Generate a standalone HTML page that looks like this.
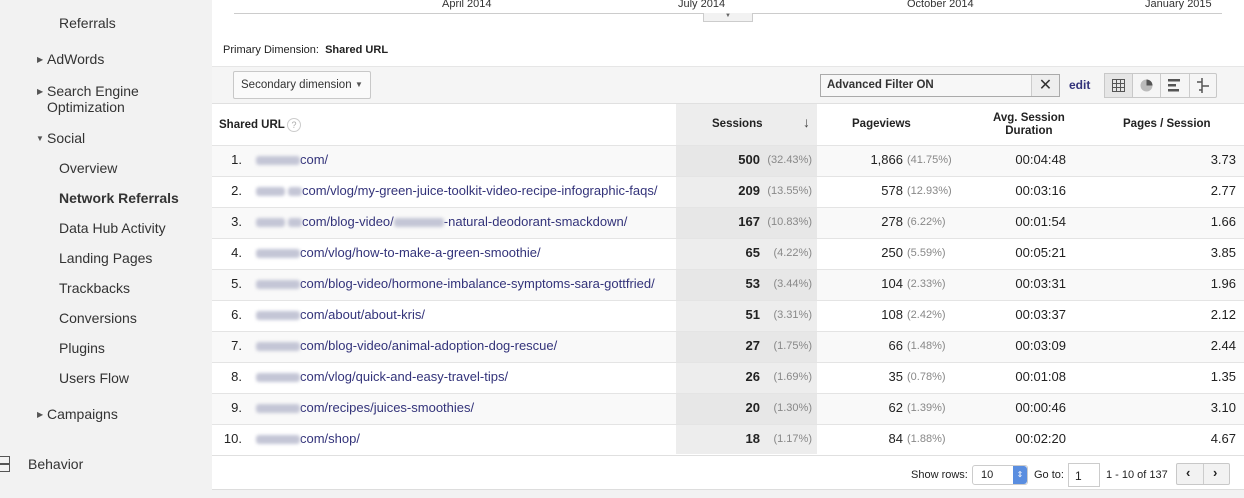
<!DOCTYPE html>
<html><head><meta charset="utf-8">
<style>
*{margin:0;padding:0;box-sizing:border-box}
body{width:1244px;height:498px;overflow:hidden;background:#f2f2f2;font-family:"Liberation Sans",Arial,sans-serif;font-size:13px;color:#222;position:relative}
.a{position:absolute;white-space:nowrap}
.side{left:0;top:0;width:212px;height:498px;background:#f2f2f2}
.main{left:212px;top:0;width:1032px;height:490px;background:#fff;border-bottom:1px solid #ddd}
.nav{font-size:14px;color:#333}
.tri{font-size:8px;color:#555}
.row{left:212px;width:1032px;height:31px;border-top:1px solid #e4e4e4}
.blob{display:inline-block;height:9px;background:#c4c6d6;filter:blur(1.5px);vertical-align:middle;border-radius:3px}
.url{color:#33337a;font-size:13px}
.pct{color:#888;font-size:11px}
.hdr{font-weight:bold;font-size:11.5px;color:#222}
.btn{border:1px solid #c8c8c8;background:#f8f8f8;border-radius:2px}
</style></head><body>
<div class="a side"></div>
<div class="a main"></div>

<div class="a nav" style="left:59px;top:15px">Referrals</div>
<div class="a tri" style="left:37px;top:55px">▶</div><div class="a nav" style="left:47px;top:51px">AdWords</div>
<div class="a tri" style="left:37px;top:87px">▶</div><div class="a nav" style="left:47px;top:83px;line-height:16px">Search Engine<br>Optimization</div>
<div class="a tri" style="left:36px;top:134px">▼</div><div class="a nav" style="left:47px;top:130px">Social</div>
<div class="a nav" style="left:59px;top:160px">Overview</div>
<div class="a nav" style="left:59px;top:190px;font-weight:bold">Network Referrals</div>
<div class="a nav" style="left:59px;top:220px">Data Hub Activity</div>
<div class="a nav" style="left:59px;top:250px">Landing Pages</div>
<div class="a nav" style="left:59px;top:280px">Trackbacks</div>
<div class="a nav" style="left:59px;top:310px">Conversions</div>
<div class="a nav" style="left:59px;top:340px">Plugins</div>
<div class="a nav" style="left:59px;top:370px">Users Flow</div>
<div class="a tri" style="left:37px;top:410px">▶</div><div class="a nav" style="left:47px;top:406px">Campaigns</div>
<div class="a" style="left:-4px;top:456px;width:14px;height:16px;border:1.5px solid #555;border-left:none"></div>
<div class="a" style="left:0;top:463px;width:10px;height:1.5px;background:#555"></div>
<div class="a nav" style="left:28px;top:456px">Behavior</div>

<!-- chart axis -->
<div class="a" style="left:234px;top:13px;width:988px;height:1px;background:#ccc"></div>
<div class="a" style="left:442px;top:-2px;font-size:11px;color:#333">April 2014</div>
<div class="a" style="left:678px;top:-2px;font-size:11px;color:#333">July 2014</div>
<div class="a" style="left:907px;top:-2px;font-size:11px;color:#333">October 2014</div>
<div class="a" style="left:1145px;top:-2px;font-size:11px;color:#333">January 2015</div>
<div class="a" style="left:703px;top:13px;width:50px;height:9px;background:#f2f2f2;border:1px solid #ccc;border-top:none;font-size:6px;color:#666;text-align:center;line-height:7px">▼</div>

<div class="a" style="left:223px;top:44px;font-size:11px;color:#222">Primary Dimension:&nbsp; <b>Shared URL</b></div>
<!-- toolbar band -->
<div class="a" style="left:212px;top:66px;width:1032px;height:38px;background:#f5f5f5;border-top:1px solid #e6e6e6;border-bottom:1px solid #e0e0e0"></div>
<div class="a btn" style="left:233px;top:71px;width:138px;height:28px;background:#fafafa"></div>
<div class="a" style="left:241px;top:79px;font-size:11.5px;color:#333">Secondary dimension</div>
<div class="a" style="left:355px;top:80px;font-size:8px;color:#555">▼</div>
<div class="a" style="left:820px;top:74px;width:240px;height:23px;border:1px solid #aaa;background:#f7f7f7"></div>
<div class="a" style="left:1031px;top:75px;width:28px;height:21px;background:#eee;border-left:1px solid #ccc;text-align:center;font-size:16px;line-height:21px;color:#333">✕</div>
<div class="a" style="left:827px;top:79px;font-size:11.5px;font-weight:bold;color:#333">Advanced Filter ON</div>
<div class="a" style="left:1069px;top:78px;font-size:12px;font-weight:bold;color:#33337a">edit</div>
<div class="a btn" style="left:1104px;top:73px;width:113px;height:25px;background:#f5f5f5"></div>
<div class="a" style="left:1104px;top:73px;width:29px;height:25px;background:#e6e6e6;border:1px solid #c8c8c8"></div>
<div class="a" style="left:1160px;top:74px;width:1px;height:23px;background:#ccc"></div>
<div class="a" style="left:1189px;top:74px;width:1px;height:23px;background:#ccc"></div>
<svg class="a" style="left:1112px;top:79px" width="13" height="13"><g stroke="#555" fill="none" stroke-width="1"><rect x=".5" y=".5" width="12" height="12"/><path d="M4.5 0V13M8.5 0V13M0 4.5H13M0 8.5H13"/></g></svg>
<svg class="a" style="left:1140px;top:79px" width="13" height="13"><circle cx="6.5" cy="6.5" r="6" fill="#bbb"/><path d="M6.5 .5A6 6 0 0 1 12.5 6.5H6.5Z" fill="#555"/></svg>
<svg class="a" style="left:1168px;top:79px" width="13" height="13"><g fill="#555"><rect x="0" y="0" width="12" height="2.5"/><rect x="0" y="5" width="8" height="2.5"/><rect x="0" y="10" width="11" height="2.5"/></g></svg>
<svg class="a" style="left:1196px;top:78px" width="14" height="15"><g stroke="#555" stroke-width="1.5" fill="none"><path d="M6 0V15M1 4H6M6 8H13M3 12H6"/></g></svg>

<!-- header -->
<div class="a" style="left:676px;top:104px;width:141px;height:350px;background:#ededed"></div>
<div class="a hdr" style="left:219px;top:119px">Shared URL</div>
<div class="a" style="left:287px;top:118px;width:14px;height:14px;border:1px solid #ccc;border-radius:50%;font-size:9px;color:#aaa;text-align:center;line-height:12px">?</div>
<div class="a hdr" style="left:712px;top:118px">Sessions</div>
<div class="a" style="left:803px;top:114px;font-size:14px;color:#444">↓</div>
<div class="a hdr" style="left:852px;top:118px">Pageviews</div>
<div class="a hdr" style="left:993px;top:112px;text-align:center;line-height:13px">Avg. Session<br>Duration</div>
<div class="a hdr" style="left:1123px;top:118px">Pages / Session</div>

<div id="rows"></div>
<script>
var d=[["1.",44,"","com/","500","32.43%","1,866","41.75%","00:04:48","3.73"],
["2.",29,".",'com/vlog/my-green-juice-toolkit-video-recipe-infographic-faqs/',"209","13.55%","578","12.93%","00:03:16","2.77"],
["3.",29,".",'com/blog-video/<span class="blob" style="width:50px"></span>-natural-deodorant-smackdown/',"167","10.83%","278","6.22%","00:01:54","1.66"],
["4.",44,"","com/vlog/how-to-make-a-green-smoothie/","65","4.22%","250","5.59%","00:05:21","3.85"],
["5.",44,"","com/blog-video/hormone-imbalance-symptoms-sara-gottfried/","53","3.44%","104","2.33%","00:03:31","1.96"],
["6.",44,"","com/about/about-kris/","51","3.31%","108","2.42%","00:03:37","2.12"],
["7.",44,"","com/blog-video/animal-adoption-dog-rescue/","27","1.75%","66","1.48%","00:03:09","2.44"],
["8.",44,"","com/vlog/quick-and-easy-travel-tips/","26","1.69%","35","0.78%","00:01:08","1.35"],
["9.",44,"","com/recipes/juices-smoothies/","20","1.30%","62","1.39%","00:00:46","3.10"],
["10.",44,"","com/shop/","18","1.17%","84","1.88%","00:02:20","4.67"]];
var h="";
d.forEach(function(r,i){var t=145+i*31;
h+='<div class="a row" style="top:'+t+'px;background:'+(i%2==0?'rgba(0,0,0,0.025)':'transparent')+'"></div>';
h+='<div class="a" style="left:212px;width:30px;text-align:right;top:'+(t+7)+'px">'+r[0]+'</div>';
h+='<div class="a url" style="left:256px;top:'+(t+7)+'px"><span class="blob" style="width:'+r[1]+'px"></span>'+(r[2]?'<span class="blob" style="width:14px;margin-left:3px"></span>':'')+r[3]+'</div>';
h+='<div class="a" style="right:484px;top:'+(t+7)+'px;font-weight:bold">'+r[4]+'</div>';
h+='<div class="a pct" style="right:432px;top:'+(t+9)+'px">('+r[5]+')</div>';
h+='<div class="a" style="right:341px;top:'+(t+7)+'px">'+r[6]+'</div>';
h+='<div class="a pct" style="left:907px;top:'+(t+9)+'px">('+r[7]+')</div>';
h+='<div class="a" style="right:178px;top:'+(t+7)+'px">'+r[8]+'</div>';
h+='<div class="a" style="right:8px;top:'+(t+7)+'px">'+r[9]+'</div>';
});
h+='<div class="a" style="left:212px;top:455px;width:1032px;height:1px;background:#e0e0e0"></div>';
document.getElementById("rows").innerHTML=h;
</script>

<!-- footer -->
<div class="a" style="left:911px;top:469px;font-size:11px;color:#222">Show rows:</div>
<div class="a" style="left:972px;top:465px;width:56px;height:20px;border:1px solid #ccc;border-radius:3px;background:#fff;font-size:11px;padding:3px 8px">10</div>
<div class="a" style="left:1013px;top:466px;width:14px;height:18px;background:#5a8ee0;border-radius:0 3px 3px 0;color:#fff;font-size:8px;text-align:center;line-height:18px">⇕</div>
<div class="a" style="left:1034px;top:469px;font-size:11px">Go to:</div>
<div class="a" style="left:1068px;top:463px;width:32px;height:24px;border:1px solid #ccc;background:#fff;font-size:12px;padding:5px 6px">1</div>
<div class="a" style="left:1106px;top:469px;font-size:11px">1 - 10 of 137</div>
<div class="a btn" style="left:1176px;top:463px;width:54px;height:22px;background:#f2f2f2"></div>
<div class="a" style="left:1203px;top:464px;width:1px;height:20px;background:#ccc"></div>
<div class="a" style="left:1186px;top:465px;font-size:13px;font-weight:bold">‹</div>
<div class="a" style="left:1213px;top:465px;font-size:13px;font-weight:bold">›</div>
</body></html>
